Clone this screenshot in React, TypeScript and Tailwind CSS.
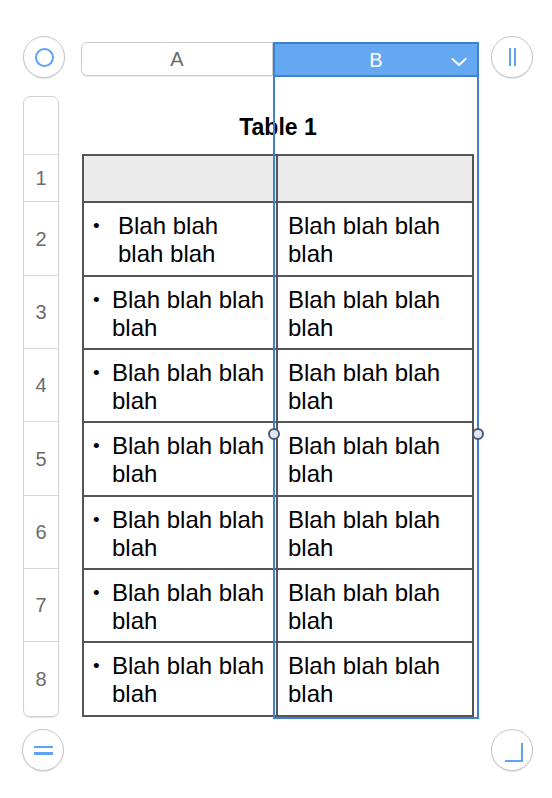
import React from "react";

const rowHeights = ["h-[47px]", "h-[74px]", "h-[73px]", "h-[73px]", "h-[74px]", "h-[73px]", "h-[73px]", "h-[74px]"];

function RoundButton({ children }: { children: React.ReactNode }) {
    return (
        <div className="w-[42px] h-[42px] rounded-full bg-white border border-[#c6c6c6] shadow-[0_1px_1px_rgba(0,0,0,0.12)] flex items-center justify-center shrink-0">
            {children}
        </div>
    );
}

function LeftCell({ first }: { first?: boolean }) {
    return (
        <div className="bg-white flex pl-[9px] pt-[9px] text-[24px] leading-[28px] text-black">
            <span className={`${first ? "w-[25px]" : "w-[19px]"} shrink-0 text-[19px] leading-[28px]`}>•</span>
            {first ? (
                <span>Blah blah<br />blah blah</span>
            ) : (
                <span>Blah blah blah<br />blah</span>
            )}
        </div>
    );
}

function RightCell() {
    return (
        <div className="bg-white pl-[10px] pt-[9px] text-[24px] leading-[28px] text-black">
            Blah blah blah<br />blah
        </div>
    );
}

export default function App() {
    const dataRows = [0, 1, 2, 3, 4, 5, 6];

    return (
        <div className="relative w-[552px] h-[798px] bg-white overflow-hidden font-['Liberation_Sans',Arial,sans-serif]">

            {/* column header bar */}
            <div className="flex items-start pt-[36px] pl-[23px]">
                <RoundButton>
                    <div className="w-[19px] h-[19px] rounded-full border-[2.5px] border-[#5ea3f0]" />
                </RoundButton>
                <div className="ml-[16px] mt-[6px] w-[192px] h-[34px] bg-white border border-[#cbcbcb] rounded-l-[6px] shadow-[0_1px_1px_rgba(0,0,0,0.08)] flex items-center justify-center text-[20px] text-[#6b6b6b]">
                    A
                </div>
                <div className="relative mt-[6px] w-[206px] h-[35px] bg-[#64a8f1] border-2 border-[#3f80d1] flex items-center justify-center text-[20px] text-white">
                    B
                    <svg className="absolute right-[10px] top-[13px]" width="16" height="10" viewBox="0 0 16 10">
                        <path d="M1.5 2 L8 8 L14.5 2" fill="none" stroke="white" strokeWidth="2" strokeLinecap="round" strokeLinejoin="round" />
                    </svg>
                </div>
                <div className="ml-[12px]">
                    <RoundButton>
                        <div className="flex gap-[3px]">
                            <div className="w-[2px] h-[18px] bg-[#5ea3f0]" />
                            <div className="w-[2px] h-[18px] bg-[#5ea3f0]" />
                        </div>
                    </RoundButton>
                </div>
            </div>

            {/* body */}
            <div className="flex pl-[23px] mt-[18px]">
                <div className="w-[36px] flex flex-col border border-[#d2d2d2] rounded-[7px] shadow-[0_1px_1px_rgba(0,0,0,0.1)] text-[20px] text-[#6b6b6b] overflow-hidden">
                    <div className="h-[57px]" />
                    {rowHeights.map((h, i) => (
                        <div key={i} className={`${h} border-t border-[#d8d8d8] flex items-center justify-center`}>
                            {i + 1}
                        </div>
                    ))}
                </div>

                <div className="ml-[23px] flex flex-col">
                    <div className="h-[58px] pt-[4px] flex items-center justify-center text-[23px] font-bold text-black">
                        Table 1
                    </div>
                    <div className="grid grid-cols-[192px_194px] grid-rows-[45px_72px_71px_71px_72px_71px_71px_72px] gap-[2px] p-[2px] bg-[#555555] w-[392px]">
                        <div className="bg-[#ebebeb]" />
                        <div className="bg-[#ebebeb]" />
                        {dataRows.map((r) => (
                            <React.Fragment key={r}>
                                <LeftCell first={r === 0} />
                                <RightCell />
                            </React.Fragment>
                        ))}
                    </div>
                </div>
            </div>

            {/* bottom controls */}
            <div className="flex justify-between pl-[22px] pr-[19px] mt-[12px]">
                <RoundButton>
                    <div className="flex flex-col gap-[4px]">
                        <div className="w-[19px] h-[2.5px] bg-[#5ea3f0]" />
                        <div className="w-[19px] h-[2.5px] bg-[#5ea3f0]" />
                    </div>
                </RoundButton>
                <RoundButton>
                    <div className="w-[18px] h-[19px] border-r-[2.5px] border-b-[2.5px] border-[#5ea3f0] translate-x-[2px] translate-y-[2px]" />
                </RoundButton>
            </div>

            {/* column selection overlay */}
            <div className="absolute left-[273px] top-[42px] w-[206px] h-[677px] border-2 border-[#3f80d1] pointer-events-none" />
            <div className="absolute left-[268px] top-[428px] w-[12px] h-[12px] rounded-full bg-[#e1e6ef] border-2 border-[#4a5877]" />
            <div className="absolute left-[472px] top-[428px] w-[12px] h-[12px] rounded-full bg-[#e1e6ef] border-2 border-[#4a5877]" />
        </div>
    );
}
